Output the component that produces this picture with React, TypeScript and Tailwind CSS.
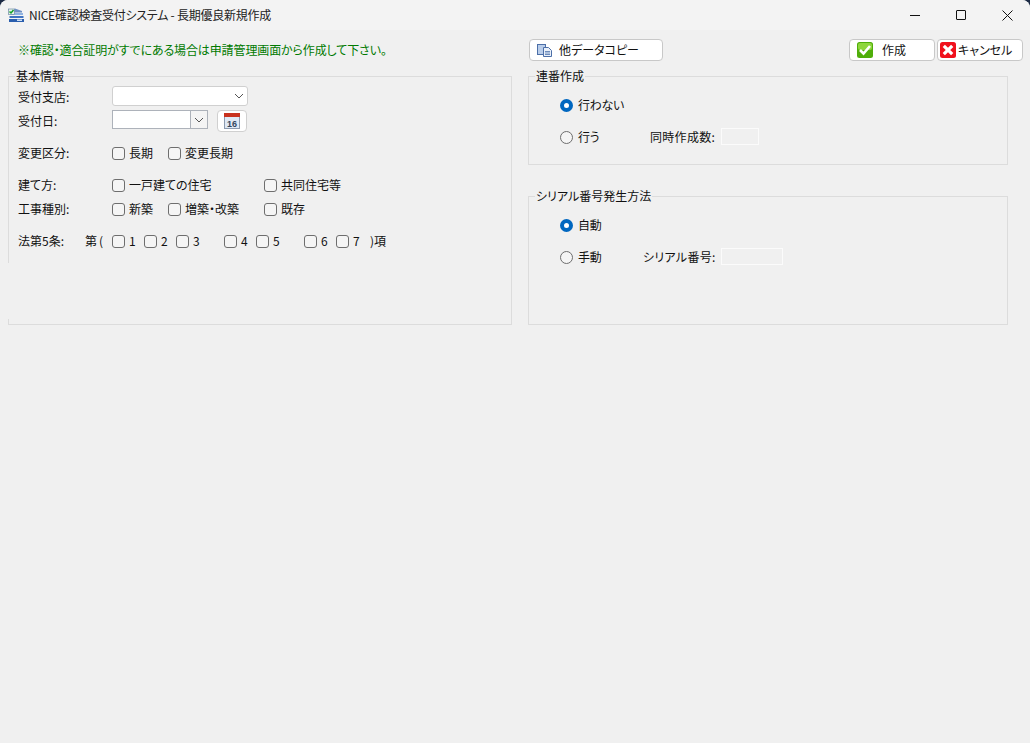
const FONT = "font-['Noto_Sans_CJK_JP','Liberation_Sans',sans-serif] [font-feature-settings:'palt']";

function AppIcon() {
  return (
    <svg width="16" height="16" viewBox="0 0 16 16">
      <path d="M7 1.5 14 4v1.5H2.5V4z" fill="#6d8fc4" />
      <rect x="2" y="6" width="13" height="2" fill="#8fb2e0" />
      <rect x="1.5" y="9" width="14" height="2" fill="#3f74c2" />
      <rect x="1" y="12" width="15" height="3" fill="#2b5fae" />
      <rect x="9" y="12.5" width="5" height="1.5" fill="#cfe0f5" />
      <rect x="0.5" y="2" width="6" height="5.5" fill="#e8f3e8" stroke="#5b7a9c" strokeWidth="0.6" />
      <path d="M1.5 4.5 3 6l2.5-3" fill="none" stroke="#12a12a" strokeWidth="1.5" />
    </svg>
  );
}

function CopyIcon() {
  return (
    <svg width="16" height="14" viewBox="0 0 16 14">
      <rect x="0.5" y="1.5" width="8" height="10" fill="#b9cdea" stroke="#4c6fa8" />
      <path d="M6.5 4.5h5l3 3v6h-8z" fill="#e9f0fa" stroke="#4c6fa8" />
      <path d="M8 8.5h5M8 10h5M8 11.5h5" stroke="#6d8cbc" />
    </svg>
  );
}

function CheckIcon() {
  return (
    <svg width="16" height="16" viewBox="0 0 16 16">
      <rect x="0" y="0" width="16" height="16" rx="2.5" fill="#4fae0a" />
      <rect x="1" y="1" width="14" height="7" rx="2" fill="#8ed63c" />
      <path d="M3 8l3.5 3.5L13 4" fill="none" stroke="#fff" strokeWidth="2.6" />
    </svg>
  );
}

function CrossIcon() {
  return (
    <svg width="16" height="16" viewBox="0 0 16 16">
      <rect x="0" y="0" width="16" height="16" rx="2.5" fill="#f0101c" />
      <path d="M3.8 3.8l8.4 8.4M12.2 3.8l-8.4 8.4" fill="none" stroke="#fff" strokeWidth="3.2" />
    </svg>
  );
}

function CalendarIcon() {
  return (
    <svg width="16" height="16" viewBox="0 0 16 16">
      <rect x="0.5" y="0.5" width="15" height="15" fill="#dfe9f5" stroke="#8c9bb0" />
      <rect x="0" y="0" width="16" height="4" fill="#c8321f" />
      <text x="8" y="13.5" textAnchor="middle" fontSize="9" fontWeight="700" fill="#33475f" fontFamily="Liberation Sans">16</text>
    </svg>
  );
}

function Chevron() {
  return (
    <svg width="10" height="6" viewBox="0 0 10 6">
      <path d="M1 1l4 4 4-4" fill="none" stroke="#555" strokeWidth="1" />
    </svg>
  );
}

function Check({ label, width }: { label: string; width: number }) {
  return (
    <div className="flex items-center shrink-0" style={{ width }}>
      <span className="w-[13px] h-[13px] rounded-[3px] border border-[#6e6e6e] bg-[#f5f5f5] shrink-0" />
      <span className="ml-1 whitespace-nowrap leading-none">{label}</span>
    </div>
  );
}

function Radio({ label, on, width = 90 }: { label: string; on?: boolean; width?: number }) {
  return (
    <div className="flex items-center shrink-0" style={{ width }}>
      {on ? (
        <span className="w-[13px] h-[13px] rounded-full border-[4px] border-[#0067c0] bg-white shrink-0" />
      ) : (
        <span className="w-[13px] h-[13px] rounded-full border border-[#6e6e6e] bg-[#f5f5f5] shrink-0" />
      )}
      <span className="ml-[5px] whitespace-nowrap leading-none tracking-[-0.3px]">{label}</span>
    </div>
  );
}

function Group({ title, className, children }: { title: string; className: string; children?: React.ReactNode }) {
  return (
    <section className={`relative border border-[#dcdcdc] ${className}`}>
      <span className="absolute left-[6px] top-[-8px] bg-[#f0f0f0] px-px leading-[14px] whitespace-nowrap">{title}</span>
      {children}
    </section>
  );
}

function Field({ label, children, className }: { label: string; children: React.ReactNode; className: string }) {
  return (
    <div className={`flex items-center ${className}`}>
      <span className="w-[94px] shrink-0 leading-none whitespace-nowrap">{label}</span>
      {children}
    </div>
  );
}

export default function App() {
  return (
    <div className={`${FONT} h-[743px] w-[1030px] overflow-hidden bg-[#1d2b45] text-[12px] text-[#111]`}>
      <div className="h-full rounded-t-[8px] bg-[#f0f0f0] overflow-hidden">
        {/* title bar */}
        <header className="h-[30px] bg-[#f3f3f3] flex items-center pl-2">
          <AppIcon />
          <span className="ml-[5px] text-[#222] whitespace-nowrap tracking-[-0.25px]">NICE確認検査受付システム - 長期優良新規作成</span>
          <div className="ml-auto flex items-center">
            <button className="w-[46px] h-[30px] flex items-center justify-center">
              <span className="w-[10px] h-px bg-[#111]" />
            </button>
            <button className="w-[46px] h-[30px] flex items-center justify-center">
              <span className="w-[10px] h-[10px] rounded-[1px] border border-[#111]" />
            </button>
            <button className="w-[46px] h-[30px] flex items-center justify-center">
              <svg width="11" height="11" viewBox="0 0 11 11">
                <path d="M.5.5l10 10M10.5.5l-10 10" stroke="#111" strokeWidth="1" />
              </svg>
            </button>
          </div>
        </header>

        {/* toolbar */}
        <div className="mt-[9px] h-[22px] flex items-center pl-[18px]">
          <p className="w-[511px] shrink-0 text-[#007a00] whitespace-nowrap tracking-[-0.12px]">※確認・適合証明がすでにある場合は申請管理画面から作成して下さい。</p>
          <button className="w-[134px] h-[22px] shrink-0 rounded-[4px] border border-[#c8c8c8] bg-white flex items-center pl-[7px]">
            <CopyIcon />
            <span className="ml-[6px] whitespace-nowrap">他データコピー</span>
          </button>
          <button className="ml-[186px] w-[86px] h-[22px] shrink-0 rounded-[4px] border border-[#c8c8c8] bg-white flex items-center pl-[7px]">
            <CheckIcon />
            <span className="ml-[9px]">作成</span>
          </button>
          <button className="ml-[2px] w-[86px] h-[22px] shrink-0 rounded-[4px] border border-[#c8c8c8] bg-white flex items-center pl-[2px]">
            <CrossIcon />
            <span className="ml-[2px] whitespace-nowrap">キャンセル</span>
          </button>
        </div>

        {/* panels */}
        <div className="mt-[15px] pl-2 flex gap-4">
          <Group title="基本情報" className="w-[504px] h-[249px] pl-[9px]">
            <span className="absolute left-[-1px] top-[186px] w-px h-[56px] bg-[#f0f0f0]" />
            <Field label="受付支店:" className="mt-[9px] h-[20px] [&>span:first-child]:mt-[2px]">
              <div className="w-[136px] h-[20px] rounded-[3px] border border-[#d0d0d0] bg-white flex items-center justify-end pr-[3px]">
                <Chevron />
              </div>
            </Field>
            <Field label="受付日:" className="mt-[4px] h-[19px] [&>span:first-child]:mt-[2px]">
              <div className="w-[96px] h-[19px] border border-[#adb2ba] bg-white flex items-center justify-end">
                <div className="w-[17px] h-full border-l border-[#adb2ba] bg-[#f4f4f4] flex items-center justify-center">
                  <Chevron />
                </div>
              </div>
              <button className="ml-[9px] mt-[3px] w-[30px] h-[22px] rounded-[4px] border border-[#d0d0d0] bg-white flex items-center justify-center">
                <CalendarIcon />
              </button>
            </Field>
            <Field label="変更区分:" className="mt-[17px] h-[14px]">
              <Check label="長期" width={56} />
              <Check label="変更長期" width={96} />
            </Field>
            <Field label="建て方:" className="mt-[18px] h-[14px]">
              <Check label="一戸建ての住宅" width={152} />
              <Check label="共同住宅等" width={96} />
            </Field>
            <Field label="工事種別:" className="mt-[10px] h-[14px]">
              <Check label="新築" width={56} />
              <Check label="増築・改築" width={96} />
              <Check label="既存" width={60} />
            </Field>
            <div className="mt-[18px] h-[14px] flex items-center">
              <span className="w-[67px] shrink-0 leading-none whitespace-nowrap">法第5条:</span>
              <span className="w-[27px] shrink-0 leading-none whitespace-nowrap tracking-[2px]">第(</span>
              <Check label="1" width={32} />
              <Check label="2" width={32} />
              <Check label="3" width={48} />
              <Check label="4" width={32} />
              <Check label="5" width={48} />
              <Check label="6" width={32} />
              <Check label="7" width={34} />
              <span className="leading-none whitespace-nowrap">)項</span>
            </div>
          </Group>

          <div className="w-[480px] flex flex-col gap-[31px]">
            <Group title="連番作成" className="h-[89px] pl-[31px]">
              <div className="mt-[21px] h-[14px] flex items-center">
                <Radio label="行わない" on />
              </div>
              <div className="mt-[18px] h-[14px] flex items-center">
                <Radio label="行う" />
                <span className="w-[71px] shrink-0 leading-none whitespace-nowrap tracking-[0.3px]">同時作成数:</span>
                <div className="-mt-[2px] w-[38px] h-[17px] border border-[#fbfbfb]" />
              </div>
            </Group>
            <Group title="シリアル番号発生方法" className="h-[129px] pl-[31px]">
              <div className="mt-[21px] h-[14px] flex items-center">
                <Radio label="自動" on />
              </div>
              <div className="mt-[18px] h-[14px] flex items-center">
                <Radio label="手動" width={83} />
                <span className="w-[78px] shrink-0 leading-none whitespace-nowrap tracking-[0.3px]">シリアル番号:</span>
                <div className="-mt-[2px] w-[62px] h-[17px] border border-[#fbfbfb]" />
              </div>
            </Group>
          </div>
        </div>
      </div>
    </div>
  );
}
